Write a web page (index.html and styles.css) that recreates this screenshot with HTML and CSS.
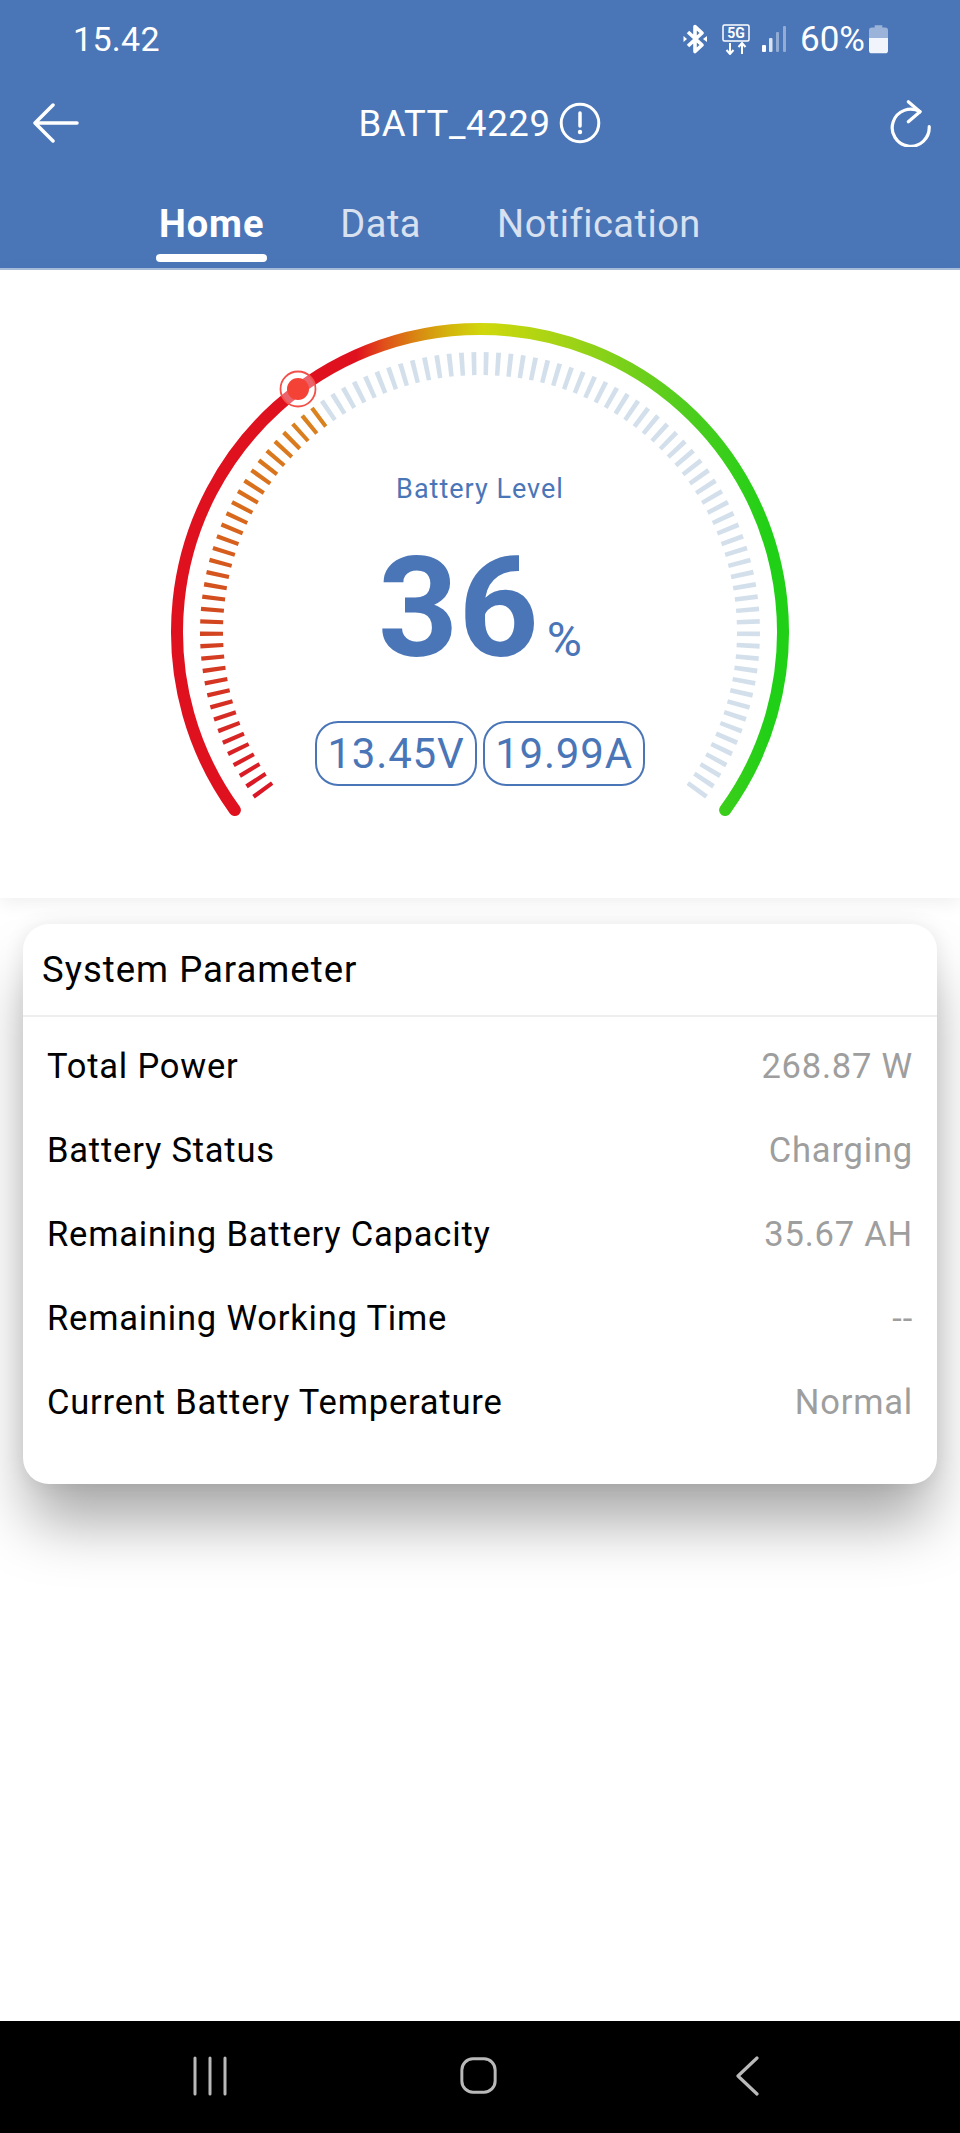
FILE: index.html
```html
<!DOCTYPE html>
<html lang="en">
<head>
<meta charset="utf-8">
<title>BATT_4229</title>
<link rel="stylesheet" href="styles.css">
</head>
<body>
<div class="screen">
  <header class="appbar">
    <div class="status">
      <span class="time">15.42</span>
      <div class="status-icons">
        <svg class="ic-bt" viewBox="0 0 26 30" width="26" height="30" fill="none" stroke="#fff" stroke-width="3.600">
          <path d="M6 8 L20 21 L13 27.500 V2.500 L20 9 L6 22" stroke-linejoin="round"/>
          <path d="M4 15 l-3.500 -3 v6 z" fill="#fff" stroke="none" transform="translate(1 0)"/>
          <path d="M21 15 l4 -3 v6 z" fill="#fff" stroke="none"/>
        </svg>
        <svg class="ic-5g" viewBox="0 0 28 31" width="28" height="31" fill="none" stroke="#fff">
          <rect x="1" y="1" width="26" height="16" rx="1.5" stroke-width="1.5"/>
          <text x="14" y="14" class="five-g">5G</text>
          <path d="M8 19 V30 M4.5 26 L8 30 L11.5 26 M20 30 V19 M16.5 23 L20 19 L23.500 23" stroke-width="2"/>
        </svg>
        <svg class="ic-signal" viewBox="0 0 26 28" width="26" height="28">
          <rect x="0" y="20" width="4" height="7" rx="1" fill="#fff"/>
          <rect x="7" y="13" width="3.500" height="14" rx="1" fill="#fff" fill-opacity=".8"/>
          <rect x="14" y="7" width="3" height="20" rx="1" fill="#fff" fill-opacity=".4"/>
          <rect x="21" y="1" width="3" height="26" rx="1" fill="#fff" fill-opacity=".4"/>
        </svg>
        <span class="pct">60%</span>
        <svg class="ic-batt" viewBox="0 0 20 30" width="19" height="30">
          <path d="M6 0.500 h8 v2.500 h3 a3 3 0 0 1 3 3 V14 H0 V6 a3 3 0 0 1 3 -3 h3 z" fill="#fff" fill-opacity=".45"/>
          <path d="M0 14 h20 v13 a3 3 0 0 1 -3 3 H3 a3 3 0 0 1 -3 -3 z" fill="#fff" fill-opacity=".92"/>
        </svg>
      </div>
    </div>
    <div class="toolbar">
      <svg class="ic-back" viewBox="0 0 46 40" width="46" height="40" fill="none" stroke="#fff" stroke-width="3.5" stroke-linecap="round" stroke-linejoin="round">
        <path d="M44 20 H3 M20 2 L2 20 L20 38"/>
      </svg>
      <div class="title">
        <span>BATT_4229</span>
        <svg viewBox="0 0 42 42" width="42" height="42" fill="none" stroke="#fff">
          <circle cx="21" cy="21" r="18.800" stroke-width="3"/>
          <path d="M21 11 V24" stroke-width="3.500" stroke-linecap="round"/>
          <circle cx="21" cy="30" r="2.200" fill="#fff" stroke="none"/>
        </svg>
      </div>
      <svg class="ic-refresh" viewBox="0 0 42 48" width="42" height="48" fill="none" stroke="#fff" stroke-width="3.200" stroke-linecap="round" stroke-linejoin="round">
        <path d="M30 12.700 A18.500 18.500 0 1 0 39.200 27.700"/>
        <path d="M18.300 2.700 L30 12.700 L18.300 22.700"/>
      </svg>
    </div>
    <nav class="tabs">
      <a class="tab tab-active">Home</a>
      <a class="tab">Data</a>
      <a class="tab">Notification</a>
    </nav>
  </header>

  <main class="content">
    <section class="gauge">
      <svg class="dial" viewBox="0 270 960 628" width="960" height="628" fill="none">
        <defs>
          <linearGradient id="arcGrad" gradientUnits="userSpaceOnUse" x1="171" y1="0" x2="789" y2="0">
            <stop offset="0.30" stop-color="#e0111f"/>
            <stop offset="0.345" stop-color="#e0501a"/>
            <stop offset="0.4" stop-color="#d88a12"/>
            <stop offset="0.45" stop-color="#d4b50c"/>
            <stop offset="0.505" stop-color="#d0d80c"/>
            <stop offset="0.65" stop-color="#9dd316"/>
            <stop offset="0.83" stop-color="#50cd1e"/>
            <stop offset="0.97" stop-color="#20d016"/>
          </linearGradient>
          <linearGradient id="tickGrad" gradientUnits="userSpaceOnUse" x1="0" y1="800" x2="0" y2="410">
            <stop offset="0" stop-color="#dc1426"/>
            <stop offset="0.2" stop-color="#d62a24"/>
            <stop offset="0.5" stop-color="#d24c1f"/>
            <stop offset="0.75" stop-color="#d96b1c"/>
            <stop offset="1" stop-color="#da841f"/>
          </linearGradient>
        </defs>
        <path class="arc" d="M234.900 810.100 A303 303 0 1 1 725.100 810.100"/>
        <path class="ticks ticks-on" pathLength="35.8" d="M265.630 793.660 A268.500 268.500 0 0 1 322.630 414.460"/>
        <path class="ticks ticks-off" pathLength="64" d="M322.630 414.460 A268.500 268.500 0 0 1 694.370 793.660"/>
        <circle class="halo" cx="298" cy="389" r="17.500"/>
        <circle class="knob" cx="298" cy="389" r="11"/>
      </svg>
      <div class="readout">
        <div class="readout-label">Battery Level</div>
        <div class="readout-value"><span class="num">36</span><span class="unit">%</span></div>
        <div class="pills">
          <span class="pill">13.45V</span>
          <span class="pill">19.99A</span>
        </div>
      </div>
    </section>

    <section class="card">
      <h2 class="card-title">System Parameter</h2>
      <ul class="rows">
        <li class="row"><span>Total Power</span><span class="val">268.87 W</span></li>
        <li class="row"><span>Battery Status</span><span class="val">Charging</span></li>
        <li class="row"><span>Remaining Battery Capacity</span><span class="val">35.67 AH</span></li>
        <li class="row"><span>Remaining Working Time</span><span class="val">--</span></li>
        <li class="row"><span>Current Battery Temperature</span><span class="val">Normal</span></li>
      </ul>
    </section>
  </main>

  <footer class="navbar">
    <svg viewBox="0 0 36 40" width="36" height="40" class="nav-recent" stroke="#b9b9b9" stroke-width="3" stroke-linecap="round">
      <path d="M3 2 V38 M18 2 V38 M33 2 V38"/>
    </svg>
    <svg viewBox="0 0 40 40" width="37" height="37" class="nav-home" fill="none" stroke="#b9b9b9" stroke-width="3.200">
      <rect x="2" y="2" width="36" height="36" rx="12"/>
    </svg>
    <svg viewBox="0 0 24 40" width="24" height="40" class="nav-back" fill="none" stroke="#b9b9b9" stroke-width="3.200" stroke-linecap="round" stroke-linejoin="round">
      <path d="M21 2 L2 20 L21 38"/>
    </svg>
  </footer>
</div>
</body>
</html>
```
FILE: styles.css
```css
* { box-sizing: border-box; }
html, body { margin: 0; padding: 0; background: #fff; }
body { font-family: Roboto, "Liberation Sans", sans-serif; }
.screen { width: 960px; height: 2133px; display: flex; flex-direction: column; overflow: hidden; }

.appbar { height: 270px; background: #4a76b8; color: #fff; border-bottom: 2px solid #a9bfdd; display: flex; flex-direction: column; flex: none; }
.status { height: 78px; padding: 0 72px 0 73px; display: flex; align-items: center; justify-content: space-between; }
.time { font-size: 34px; letter-spacing: .3px; }
.status-icons { display: flex; align-items: center; }
.ic-bt { margin-right: 14px; }
.ic-5g { margin-right: 12px; }
.ic-signal { margin-right: 12px; }
.pct { font-size: 35px; margin-right: 4px; }
.five-g { font: 700 14px Roboto, sans-serif; fill: #fff; stroke: none; text-anchor: middle; }

.toolbar { height: 90px; padding: 0 28px 0 33px; display: flex; align-items: center; justify-content: space-between; }
.title { display: flex; align-items: center; gap: 8px; font-size: 36.5px; letter-spacing: .6px; margin-left: -10px; }
.tabs { flex: 1; display: flex; padding-left: 156px; gap: 70px; align-items: flex-start; }
.tab { font-size: 38px; letter-spacing: .5px; color: rgba(255,255,255,.8); padding: 34px 3px 0; display: block; }
.tab-active { color: #fff; font-weight: 700; letter-spacing: .9px; }
.tab-active::after { content: ""; display: block; height: 8px; margin: 8px -3px 0; border-radius: 4px; background: #fff; }

.content { flex: 1; display: flex; flex-direction: column; }
.gauge { height: 628px; display: grid; box-shadow: 0 4px 18px rgba(0,0,0,.07); background: #fff; position: relative; z-index: 1; }
.dial, .readout { grid-area: 1 / 1; }
.arc { stroke: url(#arcGrad); stroke-width: 12; stroke-linecap: round; }
.ticks { stroke-width: 23; }
.ticks-on { stroke: url(#tickGrad); stroke-dasharray: .35 .65; stroke-dashoffset: .775; }
.ticks-off { stroke: #d3e0ec; stroke-dasharray: .39 .61; stroke-dashoffset: .595; }
.halo { fill: rgba(255,255,255,.35); stroke: #f4504a; stroke-width: 1.800; }
.knob { fill: #f44336; }

.readout { display: flex; flex-direction: column; align-items: center; padding-top: 203px; color: #4a76b8; }
.readout-label { font-size: 27px; line-height: 32px; letter-spacing: 1px; }
.readout-value { display: flex; align-items: baseline; height: 212px; line-height: 206px; }
.num { font-size: 140px; font-weight: 700; }
.unit { font-size: 48px; margin-left: 8px; }
.pills { display: flex; gap: 6px; margin-top: 4px; }
.pill { width: 162px; height: 65px; border: 2px solid #4a76b8; border-radius: 23px; font-size: 42px; letter-spacing: .8px; display: flex; align-items: center; justify-content: center; }

.card { margin: 26px 23px 0; height: 560px; background: #fff; border-radius: 26px; box-shadow: 0 44px 60px -6px rgba(0,0,0,.34), 0 0 20px rgba(0,0,0,.08); color: #000; }
.card-title { margin: 0; height: 93px; padding: 0 19px; display: flex; align-items: center; border-bottom: 2px solid #eee; font-size: 36.5px; font-weight: 400; letter-spacing: 1px; }
.rows { margin: 0; padding: 7px 24px 0; list-style: none; }
.row { height: 84px; display: flex; align-items: center; justify-content: space-between; font-size: 34.5px; letter-spacing: .8px; }
.val { color: #9e9e9e; }

.navbar { height: 112px; flex: none; background: #000; display: grid; grid-template-columns: 1fr 1fr 1fr; align-items: center; justify-items: center; }
.nav-recent { margin-left: 99px; margin-top: -3px; }
.nav-home { margin-top: -3px; margin-right: 3px; }
.nav-back { margin-right: 105px; margin-top: -3px; }
```
